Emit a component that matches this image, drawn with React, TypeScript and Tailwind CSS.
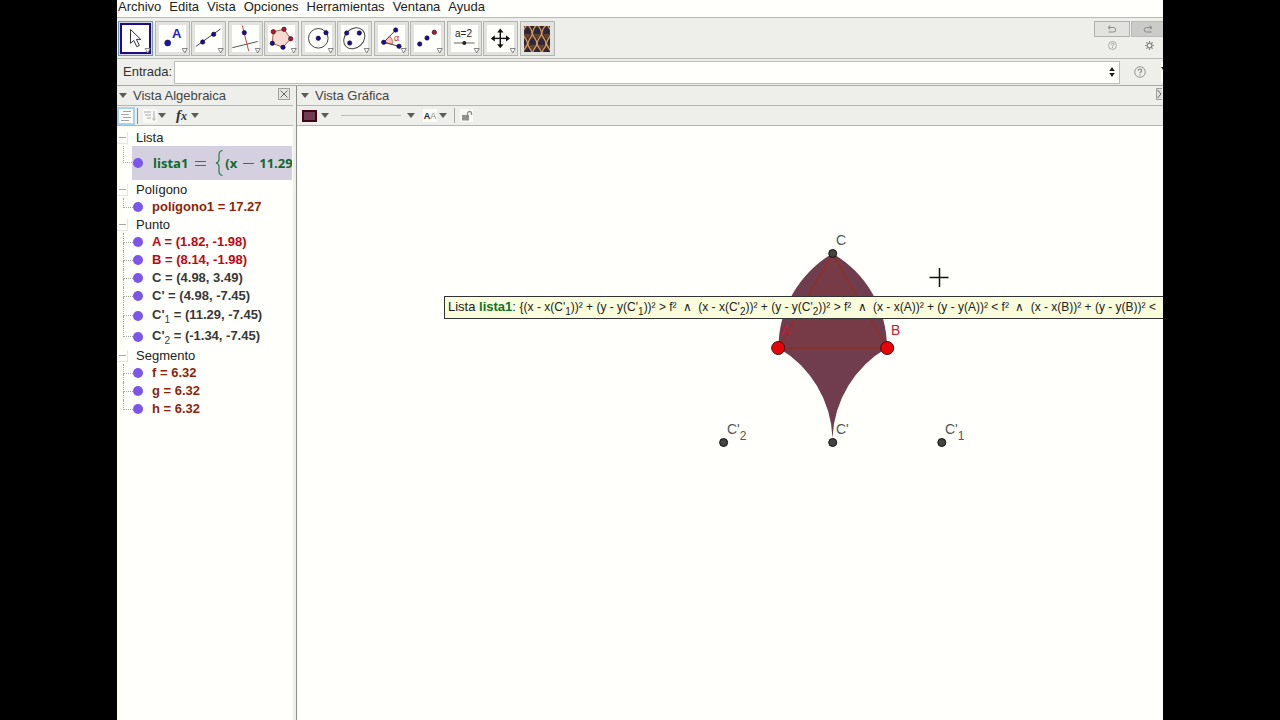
import React, { useState } from 'react';

type Item = {
  name: string;
  sub?: string;
  value: string;
  color: string;
};

type Group = {
  title: string;
  items: Item[];
};

const menus = ['Archivo', 'Edita', 'Vista', 'Opciones', 'Herramientas', 'Ventana', 'Ayuda'];

const groups: Group[] = [
  {
    title: 'Polígono',
    items: [{ name: 'polígono1', value: '17.27', color: 'text-[#8f1f0c]' }],
  },
  {
    title: 'Punto',
    items: [
      { name: 'A', value: '(1.82, -1.98)', color: 'text-[#c00510]' },
      { name: 'B', value: '(8.14, -1.98)', color: 'text-[#c00510]' },
      { name: 'C', value: '(4.98, 3.49)', color: 'text-[#383838]' },
      { name: "C'", value: '(4.98, -7.45)', color: 'text-[#383838]' },
      { name: "C'", sub: '1', value: '(11.29, -7.45)', color: 'text-[#383838]' },
      { name: "C'", sub: '2', value: '(-1.34, -7.45)', color: 'text-[#383838]' },
    ],
  },
  {
    title: 'Segmento',
    items: [
      { name: 'f', value: '6.32', color: 'text-[#8f1f0c]' },
      { name: 'g', value: '6.32', color: 'text-[#8f1f0c]' },
      { name: 'h', value: '6.32', color: 'text-[#8f1f0c]' },
    ],
  },
];

function Dot({ x, y, fill = '#1c0f8c' }: { x: number; y: number; fill?: string }) {
  return <circle cx={x} cy={y} r="2.2" fill={fill} stroke="#14083c" strokeWidth="0.6" />;
}

const tools: { label: string; icon: React.ReactNode }[] = [
  {
    label: 'Elige y mueve',
    icon: (
      <path
        d="M12.5 8.5v13.8l3.3-2.8 3 6.2 2.6-1.3-3-6h4.4z"
        fill="#fff"
        stroke="#333"
        strokeWidth="1"
      />
    ),
  },
  {
    label: 'Punto',
    icon: (
      <>
        <circle cx="12.7" cy="22" r="3" fill="#1f12b0" stroke="#14083c" strokeWidth="0.6" />
        <text x="17" y="17" fontSize="13" fontWeight="bold" fill="#2a1cc8">A</text>
      </>
    ),
  },
  {
    label: 'Recta',
    icon: (
      <>
        <path d="M4.7 25.5L29.5 8" stroke="#444" />
        <Dot x={11.7} y={21} />
        <Dot x={22.7} y={13.3} />
      </>
    ),
  },
  {
    label: 'Recta perpendicular',
    icon: (
      <>
        <path d="M4.3 26.7L29.7 20.5" stroke="#555" />
        <path d="M14.3 4.5L20.7 30" stroke="#d0423a" />
        <Dot x={16.3} y={11.7} />
      </>
    ),
  },
  {
    label: 'Polígono',
    icon: (
      <>
        <path d="M9.3 10.7L20 8.3l6.7 9.4L19 26.3 8.3 22.3z" fill="#f6d9cf" stroke="#a5604c" />
        <Dot x={9.3} y={10.7} fill="#b81622" />
        <Dot x={20} y={8.3} fill="#b81622" />
        <Dot x={26.7} y={17.7} fill="#b81622" />
        <Dot x={19} y={26.3} />
        <Dot x={8.3} y={22.3} />
      </>
    ),
  },
  {
    label: 'Circunferencia',
    icon: (
      <>
        <circle cx="17.3" cy="17.3" r="9.8" fill="none" stroke="#444" />
        <Dot x={17.3} y={17.3} />
        <Dot x={25} y={11.7} />
      </>
    ),
  },
  {
    label: 'Cónica',
    icon: (
      <>
        <ellipse cx="17.3" cy="17.3" rx="11.6" ry="9.4" transform="rotate(-45 17.3 17.3)" fill="none" stroke="#444" />
        <Dot x={9.7} y={12} />
        <Dot x={22.3} y={12} />
        <Dot x={12.7} y={22} />
      </>
    ),
  },
  {
    label: 'Ángulo',
    icon: (
      <>
        <path d="M9.7 21.3l6-6.2a8.8 8.8 0 012.7 8.2z" fill="#f8c4c0" stroke="#d04a48" strokeWidth="0.8" />
        <path d="M21.7 9L9.7 21.3 25 25.3" fill="none" stroke="#444" />
        <Dot x={9.7} y={21.3} />
        <Dot x={21.7} y={9} />
        <Dot x={25} y={25.3} />
        <text x="20" y="20" fontSize="9" fill="#c8262c">α</text>
      </>
    ),
  },
  {
    label: 'Simetría',
    icon: (
      <>
        <Dot x={9.7} y={23} />
        <Dot x={17} y={17} />
        <Dot x={24.3} y={11.3} fill="#b81622" />
      </>
    ),
  },
  {
    label: 'Deslizador',
    icon: (
      <>
        <text x="8" y="16" fontSize="10" fill="#222">a=2</text>
        <path d="M7 22h20.5" stroke="#666" />
        <circle cx="17.3" cy="22" r="2" fill="#222" />
      </>
    ),
  },
  {
    label: 'Desplaza vista gráfica',
    icon: (
      <g fill="#111">
        <path d="M10 16.7h15v1.4H10z" />
        <path d="M16.6 10H18v15h-1.4z" />
        <path d="M17.3 7.6l3.2 4h-6.4zM17.3 27.2l3.2-4h-6.4zM7.8 17.4l4-3.2v6.4zM27 17.4l-4-3.2v6.4z" />
      </g>
    ),
  },
];

// tips of the overlapping scales, upper rows first
const scales = [
  [3.5, -3], [13, -3], [22.5, -3],
  [-1, 8], [8.5, 8], [17.5, 8], [27, 8],
  [3.5, 18], [13, 18], [22.5, 18],
];

// fish-scale tile used as the icon of the custom tool
function ScalesIcon() {
  return (
    <svg viewBox="0 0 26 26" className="size-[26px]">
      <rect width="26" height="26" fill="#3a2420" />
      {scales.map(([x, y]) => (
        <g key={x + ',' + y} transform={`translate(${x} ${y})`}>
          <path d="M-4.7 11C-5 6-1.5 4.500 0 0 1.500 4.500 5 6 4.700 11L4.700 20H-4.700z" fill="#4a2e28" />
          <path d="M-4.7 11C-5 6-1.5 4.500 0 0 1.500 4.500 5 6 4.700 11" fill="none" stroke="#cfa068" strokeWidth="1.300" />
          <circle cx="0" cy="8" r="3" fill="#2a2740" />
          <path d="M-2.500 12h5M-1.500 14h3" stroke="#7d5336" />
        </g>
      ))}
    </svg>
  );
}

function Caret() {
  return (
    <svg viewBox="0 0 8 5" className="h-[5px] w-2 shrink-0">
      <path d="M0 0h8L4 5z" fill="#5c5c5a" />
    </svg>
  );
}

function HelpIcon({ className }: { className: string }) {
  return (
    <svg viewBox="0 0 12 12" className={className} fill="none" stroke="#8a8a88">
      <circle cx="6" cy="6" r="5.300" strokeWidth="0.900" />
      <path d="M4.300 4.800C4.300 2.500 7.800 2.700 7.700 4.700 7.600 5.800 6 5.900 6 7.300M6 8.300v1.200" strokeWidth="1.200" />
    </svg>
  );
}

function ToolBar() {
  const [active, setActive] = useState(0);

  return (
    <div className="flex h-[42px] items-start justify-between border-y border-[#b9b9b6] bg-[#eeeeeb] pt-[3px] pl-px">
      <div className="flex w-[437px] justify-between">
        {tools.map((tool, i) => (
          <button
            key={tool.label}
            aria-label={tool.label}
            onClick={() => setActive(i)}
            className={
              i === active
                ? 'flex size-[35px] items-center justify-center border border-[#6f97bd] bg-[#d5dce8]'
                : 'flex size-[35px] items-center justify-center border border-[#b4b4b0] bg-[#e2e2de]'
            }
          >
            <span
              className={
                i === active
                  ? 'flex size-[31px] items-center justify-center border-2 border-[#23088a] bg-[#fffffb]'
                  : 'flex size-[27px] items-center justify-center bg-[#fffffb]'
              }
            >
              <svg viewBox="0 0 35 35" className="size-[35px] shrink-0">
                {tool.icon}
                <path d="M27.200 27.500h5l-2.500 4.500z" fill="#fff" stroke="#777" strokeWidth="0.900" />
              </svg>
            </span>
          </button>
        ))}
        <button
          aria-label="Escamas"
          className="flex size-[35px] items-center justify-center border border-[#b4b4b0] bg-[#e2e2de]"
        >
          <ScalesIcon />
        </button>
      </div>

      <div className="grid grid-cols-[36px_32px] gap-x-px">
        <button aria-label="Deshace" className="flex h-4 items-center justify-center border border-[#b0b0ad] bg-[#e2e2df]">
          <svg viewBox="0 0 10 8" className="h-2 w-2.5" fill="none" stroke="#8a8a88">
            <path d="M1 2.500h5.500a2.200 2.200 0 010 4.500H1.500M3.300.5L1 2.500l2.300 2" />
          </svg>
        </button>
        <button aria-label="Rehace" className="flex h-4 items-center justify-center border border-r-0 border-[#bababa] bg-[#cbcbc9]">
          <svg viewBox="0 0 10 8" className="h-2 w-2.5" fill="none" stroke="#8a8a88">
            <path d="M9 2.500H3.500a2.200 2.200 0 000 4.500h5M6.700.5L9 2.500l-2.300 2" />
          </svg>
        </button>
        <button aria-label="Ayuda" className="flex h-4 items-center justify-center">
          <HelpIcon className="size-[9px]" />
        </button>
        <button aria-label="Preferencias" className="flex h-4 items-center justify-center pl-1">
          <svg viewBox="0 0 10 10" className="size-[9px]" fill="none" stroke="#858583">
            <circle cx="5" cy="5" r="2.600" strokeWidth="1.300" />
            <path d="M5 0v2M5 8v2M0 5h2M8 5h2M1.500 1.500l1.300 1.300M7.200 7.200l1.300 1.300M1.500 8.500l1.300-1.300M7.200 2.800l1.300-1.300" strokeWidth="1.300" />
          </svg>
        </button>
      </div>
    </div>
  );
}

function InputBar() {
  return (
    <div className="flex h-[27px] items-center border-b border-[#a8a8a5] bg-[#eeeeeb]">
      <label htmlFor="entrada" className="w-[57px] shrink-0 pl-1.5 text-[#333]">
        Entrada:
      </label>
      <div className="flex h-[23px] flex-1 items-center border border-[#bdbdba] bg-[#fffffb] pr-1">
        <input id="entrada" className="min-w-0 flex-1 outline-none" />
        <button aria-label="Historial">
          <svg viewBox="0 0 6 10" className="h-2.5 w-1.5">
            <path d="M3 0l2.800 4H.2zM3 10l2.800-4H.2z" fill="#222" />
          </svg>
        </button>
      </div>
      <div className="flex w-[43px] shrink-0 items-center justify-between pl-3.5">
        <button aria-label="Ayuda de entrada">
          <HelpIcon className="size-3" />
        </button>
        <svg viewBox="0 0 2 20" className="h-5 w-0.5">
          <path d="M0 0h2v20H0z" fill="#fff" />
          <path d="M0 5h2v3z" fill="#222" />
        </svg>
      </div>
    </div>
  );
}

function GroupTitle({ title }: { title: string }) {
  return (
    <div className="flex h-[17px] items-center text-[#222]">
      <button
        aria-label={'Contraer ' + title}
        className="mr-2 flex h-3 w-[11px] items-center border-r border-b border-[#e6e6e3] pl-0.5"
      >
        <span className="h-px w-[7px] bg-[#a8a8a6]" />
      </button>
      {title}
    </div>
  );
}

// dotted connector plus the visibility bullet of a row
function Branch({ last }: { last: boolean }) {
  return (
    <span className="flex h-full w-[35px] shrink-0 items-center pl-1.5">
      <span className="flex h-full w-[10px] flex-col">
        <span className="flex-1 border-b border-l border-dotted border-[#a5a5a5]" />
        <span className={last ? 'flex-1' : 'flex-1 border-l border-dotted border-[#a5a5a5]'} />
      </span>
      <span className="size-[10px] rounded-full bg-[#7c56ec]" />
    </span>
  );
}

function AlgebraView() {
  return (
    <section className="flex w-[176px] shrink-0 flex-col">
      <header className="flex h-[20px] items-center border-b border-[#b4b4b1] bg-[#eeeeeb] pl-0.5 text-[#444]">
        <Caret />
        <h2 className="ml-1.5 flex-1">Vista Algebraica</h2>
        <button aria-label="Cerrar" className="mr-[3px] mb-1 size-3 border border-[#a0a09d] bg-[#e6e6e3]">
          <svg viewBox="0 0 10 10" className="size-2.5" stroke="#666">
            <path d="M1.500 1.500l7 7M8.500 1.500l-7 7" />
          </svg>
        </button>
      </header>
      <div className="flex h-[20px] items-center border-b border-[#b4b4b1] bg-[#eeeeeb]">
        <button aria-label="Objetos auxiliares" className="flex h-[18px] w-[18px] items-center justify-center border-2 border-[#a9d3ec] bg-[#fffffb]">
          <svg viewBox="0 0 12 12" className="size-3" stroke="#999">
            <path d="M3 1.500h8M1 4.500h8M3 7.500h8M1 10.500h8" strokeWidth="0.900" />
          </svg>
        </button>
        <span className="ml-[2px] h-4 w-px bg-[#8a8a88]" />
        <button aria-label="Ordenar por" className="ml-[5px] flex items-center gap-px">
          <svg viewBox="0 0 14 14" className="size-3.5" fill="none" stroke="#aaa">
            <path d="M0 0h14v14H0z" fill="#f8f8f5" stroke="none" />
            <path d="M1 3h7M2 6h6M4 9h4M11 2v9M9.500 9.500L11 11.500l1.500-2" />
          </svg>
          <Caret />
        </button>
        <button aria-label="Función" className="ml-[10px] flex items-center gap-1 text-[#333]">
          <span className="font-['Liberation_Serif',serif] text-[15px] leading-4 font-bold italic">
            f<span className="text-[12px]">x</span>
          </span>
          <Caret />
        </button>
      </div>

      <div className="flex-1 pt-[3px] pr-px">
        <GroupTitle title="Lista" />
        <div className="flex h-[34px]">
          <span className="flex w-[15px] shrink-0 flex-col pl-1.5">
            <span className="h-[17px] border-b border-l border-dotted border-[#a5a5a5]" />
          </span>
          <div className="flex min-w-0 flex-1 items-center overflow-hidden bg-[#d4d0e0] pl-px whitespace-nowrap text-[#0d6b2a]">
            <span className="mr-[10px] size-[10px] shrink-0 rounded-full bg-[#7c56ec]" />
            <span className="flex items-center font-['Open_Sans',sans-serif] text-[13px] font-bold">
              lista1
              <svg viewBox="0 0 37 30" className="h-[30px] w-[37px] shrink-0" fill="none" stroke="#2b7d43">
                <path d="M7 13.500h11M7 17.500h11" />
                <path d="M34.500 2.500c-3 .5-3.500 2-3.500 4v5c0 2-.8 3-3 3.500 2.200.5 3 1.500 3 3.500v5c0 2 .5 3.500 3.500 4" strokeWidth="1.200" />
              </svg>
              (x
              <svg viewBox="0 0 22 30" className="h-[30px] w-[22px] shrink-0" stroke="#2b7d43">
                <path d="M6 15.500h11" />
              </svg>
              11.29
            </span>
          </div>
        </div>
        <div className="pt-px">
          {groups.map((group) => (
            <div key={group.title}>
              <GroupTitle title={group.title} />
              <ul>
                {group.items.map((item, i) => (
                  <li
                    key={item.name + (item.sub ?? '')}
                    className={item.sub ? 'flex h-[21px] items-center' : 'flex h-[18px] items-center'}
                  >
                    <Branch last={i === group.items.length - 1} />
                    <span className={'font-bold whitespace-nowrap ' + item.color}>
                      {item.name}
                      {item.sub && <Sub>{item.sub}</Sub>} = {item.value}
                    </span>
                  </li>
                ))}
              </ul>
            </div>
          ))}
        </div>
      </div>
    </section>
  );
}

function Sub({ children }: { children: React.ReactNode }) {
  return <sub className="static align-[-4px] text-[10px] leading-none font-normal">{children}</sub>;
}

function And() {
  return <span className="mx-[3px]">∧</span>;
}

function GraphicsView() {
  return (
    <section className="flex min-w-0 flex-1 flex-col border-l border-[#8f8f8c]">
      <header className="flex h-[20px] items-center border-b border-[#b4b4b1] bg-[#eeeeeb] pl-1 text-[#444]">
        <Caret />
        <h2 className="ml-1.5 flex-1">Vista Gráfica</h2>
        <button aria-label="Cerrar vista" className="mr-px mb-1 h-3 w-1.5 border-y border-l border-[#a0a09d] bg-[#e0e0dd]">
          <svg viewBox="0 0 5 10" className="h-2.5 w-[5px]" fill="none" stroke="#666">
            <path d="M.5 1l3.500 4-3.500 4" />
          </svg>
        </button>
      </header>
      <div className="flex h-[20px] shrink-0 items-center border-b border-[#b4b4b1] bg-[#eeeeeb] pl-[5px]">
        <button aria-label="Color" className="flex items-center gap-1">
          <span className="h-3 w-[15px] border-2 border-[#3d0716] bg-[#703c50]" />
          <Caret />
        </button>
        <button aria-label="Estilo de trazo" className="ml-3 flex items-center gap-1.5">
          <span className="h-px w-[60px] bg-[#bcbcb9]" />
          <Caret />
        </button>
        <button aria-label="Estilo de texto" className="ml-2 flex items-center gap-[2px]">
          <span className="flex h-[13px] w-[14px] items-center justify-center bg-[#fbfbf8] text-[9px] text-[#8a8a88]">
            <b className="text-[#222]">A</b>A
          </span>
          <Caret />
        </button>
        <span className="mr-[5px] ml-[7px] h-[15px] w-px bg-[#a8a8a5]" />
        <button aria-label="Fijar objeto">
          <svg viewBox="0 0 13 13" className="size-[13px]">
            <path d="M0 0h13v13H0z" fill="#f8f8f5" />
            <path d="M2 6h7v5.500H2z" fill="#8f8f8d" />
            <path d="M7.500 6V4.500a2 2 0 014 0V6" fill="none" stroke="#8f8f8d" strokeWidth="1.300" />
          </svg>
        </button>
      </div>

      <div className="relative flex-1 overflow-hidden">
        <svg viewBox="297 126 866 594" className="h-[594px] w-[866px]" fontSize="14">
          <path
            d="M778.500 348A109 109 0 01832.500 253.500 109 109 0 01887 348 109 109 0 00832.500 438 109 109 0 00778.500 348z"
            fill="#703d4f"
          />
          <path d="M778.500 348h108.500L832.500 253.500z" fill="#9c3318" fillOpacity="0.15" stroke="#8f3023" strokeWidth="1.500" />
          <g fill="#444440" stroke="#111" strokeWidth="1">
            <circle cx="832.700" cy="253.500" r="4" />
            <circle cx="832.700" cy="442.500" r="4" />
            <circle cx="941.800" cy="442.500" r="4" />
            <circle cx="723.600" cy="442.500" r="4" />
          </g>
          <g fill="#e8050a" stroke="#4a0606" strokeWidth="1">
            <circle cx="778.200" cy="348" r="6.500" />
            <circle cx="887.200" cy="348" r="6.500" />
          </g>
          <g fill="#555">
            <text x="836" y="245">C</text>
            <text x="836" y="434">C'</text>
            <text x="727" y="434">C'<tspan fontSize="12" dy="6">2</tspan></text>
            <text x="945" y="434">C'<tspan fontSize="12" dy="6">1</tspan></text>
          </g>
          <g fill="#c8173a">
            <text x="781" y="335">A</text>
            <text x="891" y="335">B</text>
          </g>
          <path d="M929.500 277.500h19M939.500 268v19" stroke="#111" strokeWidth="1.500" />
        </svg>

        <div
          role="tooltip"
          className="absolute top-[170px] left-[147px] h-[23px] border border-[#333] bg-[#fafddc] px-[3px] leading-5 whitespace-nowrap text-[#222]"
        >
          Lista <b className="text-[#0d7326]">lista1</b>:{' '}
          <span className="text-[12px]">
            {'{'}(x - x(C'<Sub>1</Sub>))² + (y - y(C'<Sub>1</Sub>))² &gt; f² <And /> (x - x(C'<Sub>2</Sub>))² + (y -
            y(C'<Sub>2</Sub>))² &gt; f² <And /> (x - x(A))² + (y - y(A))² &lt; f² <And /> (x - x(B))² + (y - y(B))²
            &lt;
          </span>
        </div>
        {/* the tooltip runs on past the right edge of the window */}
        <div className="absolute top-[170px] right-0 h-[23px] w-1 border-y border-[#333] bg-[#fafddc]" />
      </div>
    </section>
  );
}

function App() {
  return (
    <div className="min-h-screen bg-black px-[117px] font-['Liberation_Sans',Arial,sans-serif] text-[13px] leading-4">
      <div className="flex min-h-screen flex-col overflow-hidden bg-[#fffffb]">
        <nav className="flex h-[17px] items-start gap-2 pl-px leading-[14px] text-[#222]">
          {menus.map((menu) => (
            <button key={menu}>{menu}</button>
          ))}
        </nav>
        <ToolBar />
        <InputBar />
        <main className="flex flex-1">
          <AlgebraView />
          <div className="w-[3px] shrink-0 bg-[#eeeeeb]" />
          <GraphicsView />
        </main>
      </div>
    </div>
  );
}

export default App;
